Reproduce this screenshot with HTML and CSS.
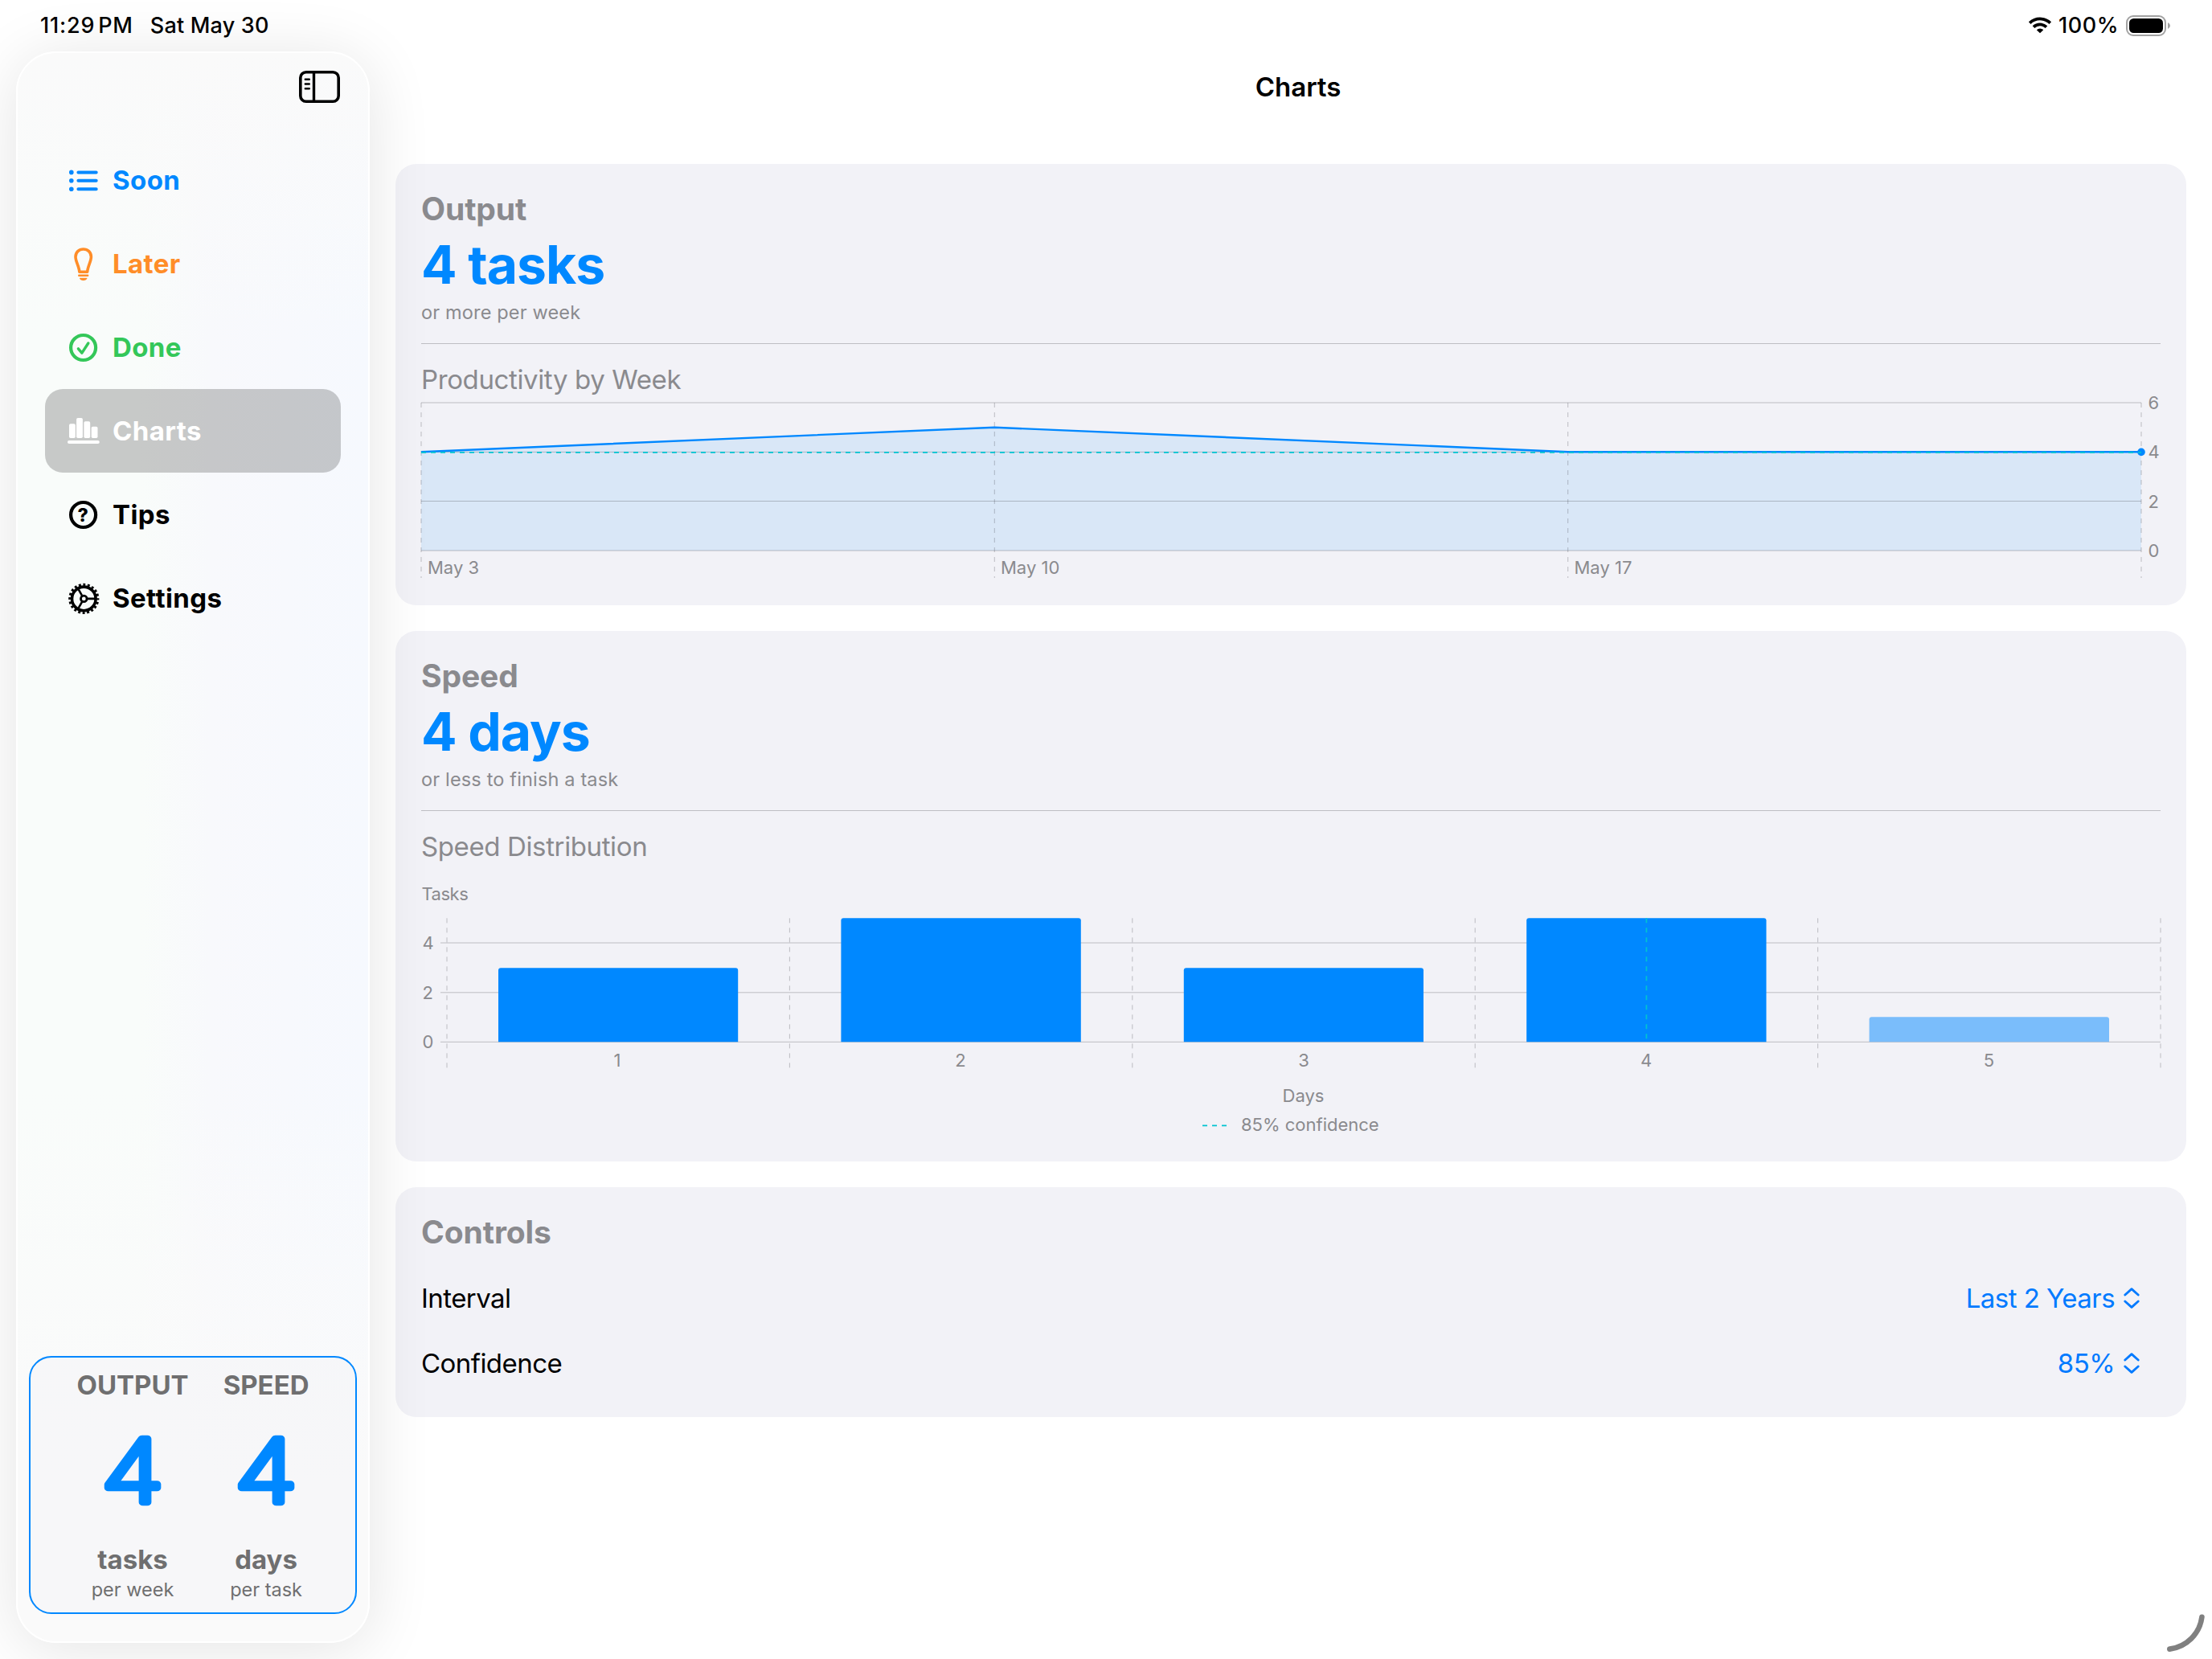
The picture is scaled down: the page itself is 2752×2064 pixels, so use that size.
FILE: index.html
```html
<!DOCTYPE html>
<html lang="en">
<head>
  <meta charset="UTF-8">
  <meta name="viewport" content="width=device-width, initial-scale=1.0">
  <title>Charts</title>
  <link rel="stylesheet" href="styles.css">
</head>
<body>
  <div class="status-bar">
    <div class="status-left">
      <span class="status-time">11:29 PM</span>
      <span class="status-date">Sat May 30</span>
    </div>
    <div class="status-right">
      <svg class="wifi" width="30" height="22" viewBox="0 0 30 22">
        <path d="M2.2 7.6 A18.5 18.5 0 0 1 27.8 7.6" fill="none" stroke="#000" stroke-width="3.8"/>
        <path d="M7 12.6 A11.6 11.6 0 0 1 23 12.6" fill="none" stroke="#000" stroke-width="3.8"/>
        <path d="M15 20.3 L10.8 16.2 A6 6 0 0 1 19.2 16.2 Z" fill="#000"/>
      </svg>
      <span class="status-percent">100%</span>
      <svg class="battery" width="56" height="26" viewBox="0 0 56 26">
        <rect x="1" y="1" width="48" height="24" rx="8" fill="none" stroke="#a2a2a2" stroke-width="2"/>
        <rect x="4" y="4" width="42" height="18" rx="5.5" fill="#000"/>
        <path d="M52 9 Q55 10.5 55 13 Q55 15.5 52 17 Z" fill="#a2a2a2"/>
      </svg>
    </div>
  </div>

  <div class="app">
    <aside class="sidebar">
      <div class="sidebar-header">
        <svg width="51" height="40" viewBox="0 0 51 40" fill="none" stroke="#000">
          <rect x="1.8" y="1.8" width="47.4" height="36.4" rx="7" stroke-width="3.6"/>
          <path d="M18.5 2 V38" stroke-width="3.4"/>
          <path d="M7.8 10.8 H12.8 M7.8 16.5 H12.8 M7.8 22.2 H12.8" stroke-width="2.4" stroke-linecap="round"/>
        </svg>
      </div>

      <nav class="nav">
        <a class="nav-item nav-soon">
          <svg class="icon" viewBox="0 0 40 40">
            <g fill="currentColor">
              <circle cx="4.8" cy="10.4" r="2.8"/>
              <circle cx="4.8" cy="20.7" r="2.8"/>
              <circle cx="4.8" cy="31.2" r="2.8"/>
            </g>
            <path d="M13.4 10.4 H35.7 M13.4 20.7 H35.7 M13.4 31.2 H35.7" stroke="currentColor" stroke-width="4" stroke-linecap="round"/>
          </svg>
          <span>Soon</span>
        </a>
        <a class="nav-item nav-later">
          <svg class="icon" viewBox="0 0 40 40">
            <path d="M14.8 30.2 H24.7 C25 23.5 29.4 17.5 29.4 11.5 C29.4 5.8 25.2 2 19.7 2 C14.2 2 10 5.8 10 11.5 C10 17.5 14.5 23.5 14.8 30.2 Z" fill="none" stroke="currentColor" stroke-width="3.6" stroke-linejoin="round"/>
            <path d="M14.3 34.8 H25.1" stroke="currentColor" stroke-width="2.6" stroke-linecap="round"/>
            <path d="M14.8 37.7 H24.6 Q23.5 41 19.7 41 Q15.9 41 14.8 37.7 Z" fill="currentColor"/>
          </svg>
          <span>Later</span>
        </a>
        <a class="nav-item nav-done">
          <svg class="icon" viewBox="0 0 40 40" fill="none" stroke="currentColor" stroke-linecap="round" stroke-linejoin="round">
            <circle cx="19.6" cy="20.5" r="15.5" stroke-width="4.2"/>
            <path d="M13.4 21.8 L17.9 27.2 L25.8 15" stroke-width="3.4"/>
          </svg>
          <span>Done</span>
        </a>
        <a class="nav-item active">
          <svg class="icon" viewBox="0 0 40 40" fill="currentColor">
            <rect x="2" y="11.2" width="7.8" height="17.8" rx="1.8"/>
            <rect x="11.1" y="4" width="7.8" height="25" rx="1.8"/>
            <rect x="20.4" y="8.2" width="7.8" height="20.8" rx="1.8"/>
            <rect x="29.7" y="14.8" width="7.8" height="14.2" rx="1.8"/>
            <rect x="0" y="32" width="39.8" height="4" rx="2"/>
          </svg>
          <span>Charts</span>
        </a>
        <a class="nav-item">
          <svg class="icon" viewBox="0 0 40 40">
            <circle cx="19.6" cy="20.5" r="15.5" fill="none" stroke="currentColor" stroke-width="4.2"/>
            <text class="icon-mark" x="19.4" y="28.6" text-anchor="middle">?</text>
          </svg>
          <span>Tips</span>
        </a>
        <a class="nav-item">
          <svg class="icon" viewBox="0 0 40 40" fill="none" stroke="currentColor">
            <circle cx="20.3" cy="20.9" r="14.8" stroke-width="3.6"/>
            <circle cx="20.3" cy="20.9" r="17.5" stroke-width="3.2" stroke-dasharray="2.9 2.598" stroke-dashoffset="1.45"/>
            <circle cx="20.3" cy="20.9" r="3.8" stroke-width="2.8"/>
            <path d="M25 20.9 H34 M18 16.9 L13.3 8.7 M18 24.9 L13.3 33.1" stroke-width="2.6"/>
          </svg>
          <span>Settings</span>
        </a>
      </nav>

      <div class="summary">
        <div class="summary-col">
          <div class="summary-label">OUTPUT</div>
          <svg class="summary-number" width="90" height="140" viewBox="-45 0 90 140">
            <text x="0" y="109" text-anchor="middle" transform="scale(1.18 1)">4</text>
          </svg>
          <div class="summary-unit">tasks</div>
          <div class="summary-per">per week</div>
        </div>
        <div class="summary-col">
          <div class="summary-label">SPEED</div>
          <svg class="summary-number" width="90" height="140" viewBox="-45 0 90 140">
            <text x="0" y="109" text-anchor="middle" transform="scale(1.18 1)">4</text>
          </svg>
          <div class="summary-unit">days</div>
          <div class="summary-per">per task</div>
        </div>
      </div>
    </aside>

    <main class="main">
      <h1 class="page-title">Charts</h1>

      <section class="card card-output">
        <h2>Output</h2>
        <div class="big">4 tasks</div>
        <div class="sub">or more per week</div>
        <hr>
        <h3>Productivity by Week</h3>
        <svg class="chart" width="2196" height="260" viewBox="508 480 2196 260">
          <path class="area" d="M524 562.4 L1237.3 531.7 L1950.7 562.4 H2664 V685 H524 Z"/>
          <path class="grid" d="M524 501 H2664 M524 562.4 H2664 M524 623.5 H2664 M524 685 H2664"/>
          <path class="grid-dash" d="M524 501 V719 M1237.3 501 V719 M1950.7 501 V719 M2664 501 V719"/>
          <path class="line" d="M524 562.2 L1237.3 531.7 L1950.7 562.2 H2664"/>
          <circle class="dot" cx="2664" cy="562.4" r="4.8"/>
          <path class="confidence" d="M524 562.8 H2664"/>
          <g class="labels">
            <text x="532" y="714">May 3</text>
            <text x="1245" y="714">May 10</text>
            <text x="1958.5" y="714">May 17</text>
            <text x="2672.5" y="509">6</text>
            <text x="2672.5" y="570.3">4</text>
            <text x="2672.5" y="631.7">2</text>
            <text x="2672.5" y="693">0</text>
          </g>
        </svg>
      </section>

      <section class="card card-speed">
        <h2>Speed</h2>
        <div class="big">4 days</div>
        <div class="sub">or less to finish a task</div>
        <hr>
        <h3>Speed Distribution</h3>
        <svg class="chart" width="2196" height="360" viewBox="508 1060.67 2196 360">
          <path class="grid" d="M548 1172.7 H2688 M548 1234.5 H2688 M548 1296 H2688"/>
          <path class="grid-dash" d="M556 1142 V1328 M982.4 1142 V1328 M1408.8 1142 V1328 M1835.2 1142 V1328 M2261.6 1142 V1328 M2688 1142 V1328"/>
          <g class="bars">
            <path d="M620 1296 V1207 a3 3 0 0 1 3 -3 H915.2 a3 3 0 0 1 3 3 V1296 Z"/>
            <path d="M1046.4 1296 V1145 a3 3 0 0 1 3 -3 H1341.8 a3 3 0 0 1 3 3 V1296 Z"/>
            <path d="M1472.8 1296 V1207 a3 3 0 0 1 3 -3 H1768 a3 3 0 0 1 3 3 V1296 Z"/>
            <path d="M1899.2 1296 V1145 a3 3 0 0 1 3 -3 H2194.5 a3 3 0 0 1 3 3 V1296 Z"/>
            <path class="bar-light" d="M2325.6 1296 V1268 a3 3 0 0 1 3 -3 H2621 a3 3 0 0 1 3 3 V1296 Z"/>
          </g>
          <path class="confidence" d="M2048.4 1142 V1296"/>
          <path class="confidence" d="M1496 1400 H1526"/>
          <g class="labels">
            <text class="axis-title" x="524.5" y="1120">Tasks</text>
            <text x="525.5" y="1180.7">4</text>
            <text x="525.5" y="1242.3">2</text>
            <text x="525.5" y="1304">0</text>
            <text x="1544" y="1406.7">85% confidence</text>
          </g>
          <g class="labels centered">
            <text x="768" y="1327">1</text>
            <text x="1195" y="1327">2</text>
            <text x="1622" y="1327">3</text>
            <text x="2048" y="1327">4</text>
            <text x="2474.5" y="1327">5</text>
            <text x="1621.5" y="1371">Days</text>
          </g>
        </svg>
      </section>

      <section class="card card-controls">
        <h2>Controls</h2>
        <div class="control-row">
          <span>Interval</span>
          <span class="picker">
            Last 2 Years
            <svg width="20" height="28" viewBox="0 0 20 28"><path d="M1.8 10 L10 2.6 L18.2 10 M1.8 18 L10 25.4 L18.2 18"/></svg>
          </span>
        </div>
        <div class="control-row">
          <span>Confidence</span>
          <span class="picker">
            85%
            <svg width="20" height="28" viewBox="0 0 20 28"><path d="M1.8 10 L10 2.6 L18.2 10 M1.8 18 L10 25.4 L18.2 18"/></svg>
          </span>
        </div>
      </section>
    </main>
  </div>

  <svg class="resize-handle" width="56" height="56" viewBox="0 0 56 56">
    <path d="M43.4 3.8 A46 46 0 0 1 3.3 43.6"/>
  </svg>
</body>
</html>
```

FILE: styles.css
```css
:root {
  --blue: #0088FF;
  --link: #007AFF;
  --orange: #FF8D28;
  --green: #34C759;
  --teal: #00C3D0;
  --gray: #8A8A8E;
  --card: #F2F2F7;
  --grid: rgba(60, 60, 67, 0.29);
}

* {
  box-sizing: border-box;
}

body {
  margin: 0;
  width: 2752px;
  height: 2064px;
  overflow: hidden;
  background-color: #FFFFFF;
  color: #000;
  font-family: Inter, 'Liberation Sans', sans-serif;
  font-size: 33px;
}

/* Status bar */
.status-bar {
  position: relative;
  z-index: 2;
  display: flex;
  justify-content: space-between;
  height: 64px;
  padding: 0 51px 0 50px;
  font-size: 27px;
  font-weight: 500;
  line-height: 64px;
}

.status-left,
.status-right {
  display: flex;
  align-items: center;
  height: 64px;
}

.status-left {
  gap: 21px;
}

.status-time {
  letter-spacing: 0.8px;
  word-spacing: -4px;
}

.status-date {
  letter-spacing: 0.2px;
}

.status-percent {
  letter-spacing: 0.5px;
}

.battery {
  margin-left: 9px;
}

.wifi {
  margin-right: 8px;
}

/* Sidebar */
.app {
  display: flex;
  height: 2000px;
}

.sidebar {
  position: relative;
  z-index: 1;
  display: flex;
  flex-direction: column;
  width: 440px;
  height: 1980px;
  margin-left: 20px;
  padding: 0 14px 34px;
  border: 2px solid #FFFFFF;
  border-radius: 50px;
  background: linear-gradient(180deg, #FAFAFA 0%, rgba(250, 250, 250, 0) 18%, rgba(250, 250, 250, 0) 65%, #FAFAFA 90%), linear-gradient(90deg, #F9FCFA 0%, #F9FCFA 35%, #F8F9FC 55%, #F6F9FE 100%);
  box-shadow: 0 8px 80px rgba(0, 0, 0, 0.11);
}

.sidebar-header {
  display: flex;
  justify-content: flex-end;
  height: 106px;
  padding: 22px 21px 0 0;
}

.nav {
  padding: 0 20px;
}

.nav-item {
  display: flex;
  align-items: center;
  gap: 16px;
  height: 104px;
  padding-left: 28px;
  border-radius: 22px;
  font-weight: 700;
  letter-spacing: 0.4px;
}

.nav-soon {
  color: var(--blue);
}

.nav-later {
  color: var(--orange);
}

.nav-done {
  color: var(--green);
}

.nav-item.active {
  background-color: rgba(0, 0, 0, 0.2);
  color: #FFFFFF;
}

.icon {
  width: 40px;
  height: 40px;
  overflow: visible;
}

.icon-mark {
  fill: currentColor;
  font-size: 23px;
  font-weight: 800;
}

/* Summary box */
.summary {
  display: flex;
  justify-content: center;
  height: 321px;
  margin-top: auto;
  padding-top: 12px;
  gap: 43px;
  border: 2px solid var(--blue);
  border-radius: 28px;
  background-color: rgba(242, 242, 247, 0.4);
  color: #6F6F70;
  text-align: center;
}

.summary-col {
  display: flex;
  flex-direction: column;
  align-items: center;
}

.summary-label {
  font-weight: 700;
  line-height: 44px;
}

.summary-number {
  margin-top: 15px;
}

.summary-number text {
  fill: var(--blue);
  stroke: var(--blue);
  stroke-width: 8.5px;
  stroke-linejoin: round;
  font-size: 108px;
  font-weight: 200;
}

.summary-unit {
  margin-top: 18px;
  font-weight: 700;
  line-height: 44px;
}

.summary-per {
  margin-top: 1px;
  font-size: 23.5px;
  line-height: 30px;
}

/* Main column */
.main {
  display: flex;
  flex-direction: column;
  gap: 32px;
  width: 2228px;
  margin-left: 32px;
}

.page-title {
  height: 108px;
  margin: 0;
  padding-left: 18px;
  font-size: 33px;
  font-weight: 600;
  line-height: 88px;
  text-align: center;
}

.card {
  padding: 32px 32px 0;
  border-radius: 26px;
  background-color: var(--card);
  color: var(--gray);
}

.card-output {
  height: 548.67px;
}

.card-speed {
  height: 660px;
}

.card-controls {
  height: 286px;
}

.card h2 {
  margin: 0;
  font-size: 39px;
  font-weight: 700;
  letter-spacing: -0.1px;
  line-height: 48px;
}

.big {
  margin-top: 4px;
  color: var(--blue);
  font-size: 66px;
  font-weight: 700;
  letter-spacing: -1px;
  line-height: 82px;
}

.sub {
  margin-top: 3px;
  font-size: 23.5px;
  letter-spacing: 0.16px;
  line-height: 32px;
}

.card hr {
  height: 1px;
  margin: 22px 0;
  border: none;
  background-color: #BEBEC3;
}

.card h3 {
  height: 30px;
  margin: 0;
  font-size: 33px;
  font-weight: 400;
  letter-spacing: -0.38px;
  line-height: 44px;
}

/* Charts */
.chart {
  display: block;
  margin-left: -16px;
  overflow: visible;
}

.grid {
  stroke: var(--grid);
  stroke-width: 1;
}

.grid-dash {
  stroke: var(--grid);
  stroke-width: 1;
  stroke-dasharray: 6 6;
}

.area {
  fill: var(--blue);
  fill-opacity: 0.1;
}

.line {
  fill: none;
  stroke: var(--blue);
  stroke-width: 2.4;
}

.dot {
  fill: var(--blue);
}

.confidence {
  stroke: var(--teal);
  stroke-width: 1.7;
  stroke-dasharray: 6 6;
}

.bars {
  fill: var(--blue);
}

.bar-light {
  fill: #7ABDFB;
}

.labels {
  fill: var(--gray);
  font-size: 22px;
}

.axis-title {
  letter-spacing: -0.5px;
}

.centered {
  text-anchor: middle;
}

/* Controls */
.control-row {
  display: flex;
  align-items: center;
  justify-content: space-between;
  height: 81px;
  padding-right: 26px;
  color: #000;
  letter-spacing: -0.55px;
}

.card-controls h2 {
  margin-bottom: 18px;
}

.picker {
  display: flex;
  align-items: center;
  gap: 11px;
  color: var(--link);
}

.picker path {
  fill: none;
  stroke: var(--link);
  stroke-width: 2.8;
  stroke-linecap: round;
  stroke-linejoin: round;
}

/* Window corner handle sits over the page */
.resize-handle {
  position: absolute;
  left: 2696px;
  top: 2008px;
  fill: none;
  stroke: #808080;
  stroke-width: 6.6;
  stroke-linecap: round;
}
```
